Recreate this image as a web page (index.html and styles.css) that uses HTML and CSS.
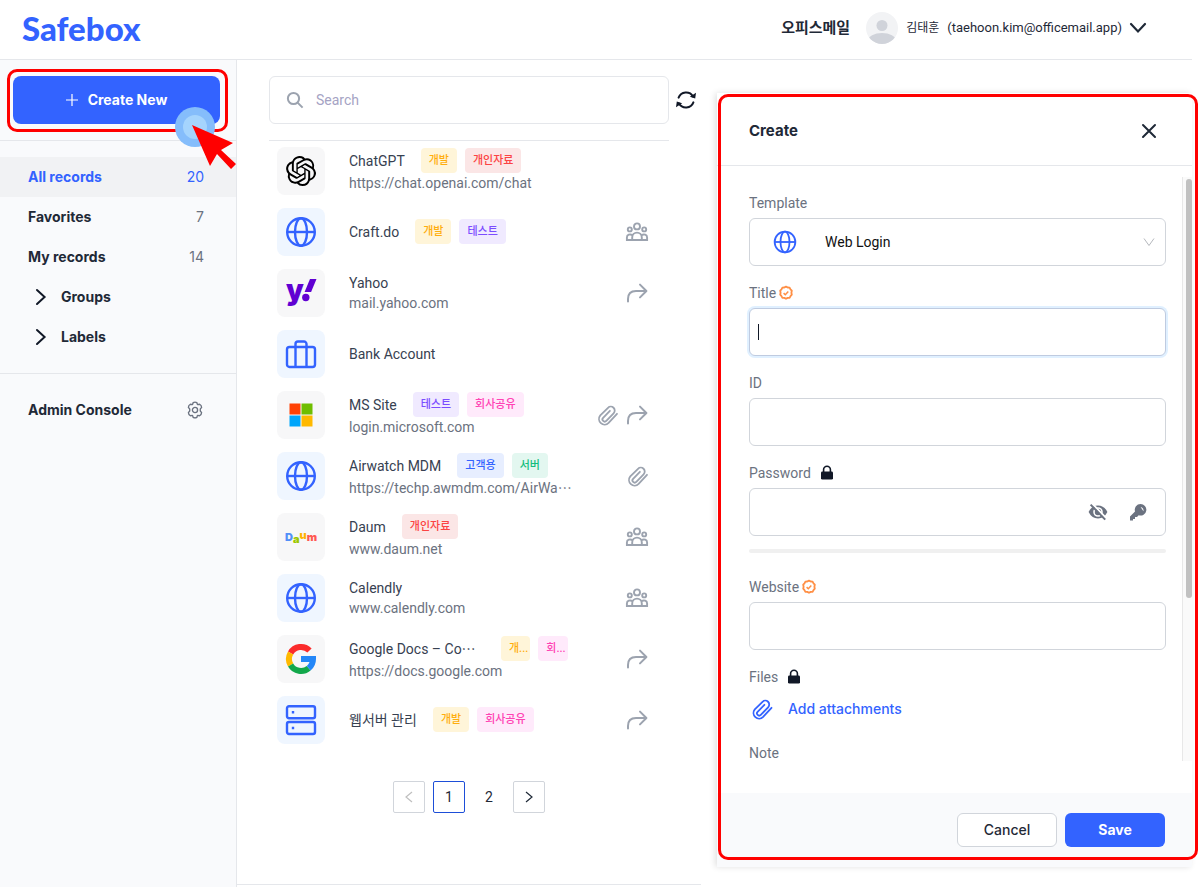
FILE: index.html
```
<!DOCTYPE html>
<html lang="ko">
<head>
    <meta charset="UTF-8">
    <meta name="viewport" content="width=device-width, initial-scale=1.0">
    <title>Safebox</title>
    <link rel="stylesheet" href="styles.css">
</head>
<body>

    <!-- shared icons -->
    <svg class="sprite" aria-hidden="true">
        <symbol id="i-globe" viewBox="0 0 32 32">
            <g fill="none" stroke="currentColor" stroke-width="2.4">
                <circle cx="16" cy="16" r="13.8"/>
                <ellipse cx="16" cy="16" rx="6" ry="13.8"/>
                <path d="M2 16h28"/>
            </g>
        </symbol>
        <symbol id="i-people" viewBox="0 0 24 24">
            <g fill="none" stroke="currentColor" stroke-width="1.9">
                <circle cx="12" cy="6.4" r="3"/>
                <circle cx="4.8" cy="9.4" r="2"/>
                <circle cx="19.2" cy="9.4" r="2"/>
                <path d="M7.2 20v-2.6a4.8 4.8 0 0 1 9.6 0V20z"/>
                <path d="M7.2 20H1.900v-2.600c0-2.600 3-3.800 5.700-2.200M16.800 20h5.300v-2.600c0-2.600-3-3.800-5.700-2.200"/>
            </g>
        </symbol>
        <symbol id="i-share" viewBox="0 0 24 24">
            <path d="M3 20.5V18q0-8 8-8h10M15 3.6l6.4 6.4-6.400 6.400" fill="none" stroke="currentColor" stroke-width="2" stroke-linecap="round" stroke-linejoin="round"/>
        </symbol>
        <symbol id="i-clip" viewBox="0 0 24 24">
            <path d="M22 9.8 L13.6 18.9a5.6 5.6 0 0 1-8.3-7.5L13 3.8a3.9 3.9 0 0 1 5.6 5.5l-7.3 7.6a2.2 2.2 0 0 1-3.2-3.1l6.8-7" transform="translate(0 1)" fill="none" stroke="currentColor" stroke-width="1.8" stroke-linecap="round" stroke-linejoin="round"/>
        </symbol>
        <symbol id="i-lock" viewBox="0 0 14 16">
            <path d="M3.6 7V4.6a3.4 3.4 0 0 1 6.8 0V7" fill="none" stroke="currentColor" stroke-width="1.6"/>
            <rect x="1" y="6.6" width="12" height="8" rx="1.4" fill="currentColor"/>
        </symbol>
        <symbol id="i-verified" viewBox="0 0 16 16">
            <path d="M8 1.6l1.7.9 1.9.1.9 1.7 1.3 1.4-.4 2 .4 2-1.3 1.4-.9 1.7-1.9.1-1.7.9-1.7-.9-1.9-.1-.9-1.7-1.3-1.4.4-2-.4-2 1.3-1.4.9-1.7 1.9-.1z" fill="none" stroke="currentColor" stroke-width="1.8" stroke-linejoin="round"/>
            <path d="M5.6 8.1l1.7 1.6 3-3.1" fill="none" stroke="currentColor" stroke-width="1.5"/>
        </symbol>
        <symbol id="i-right" viewBox="0 0 12 18">
            <path d="M2 2l7.6 7L2 16" fill="none" stroke="currentColor" stroke-width="2" stroke-linecap="round"/>
        </symbol>
        <symbol id="i-page" viewBox="0 0 12 12">
            <path d="M3 1l6 5-6 5" fill="none" stroke="currentColor" stroke-width="1.2"/>
        </symbol>
    </svg>

    <div class="app">
        <header class="topbar">
            <a class="logo" href="#">Safebox</a>
            <button class="account" type="button">
                <strong class="company">오피스메일</strong>
                <svg class="avatar" viewBox="0 0 32 32">
                    <defs><clipPath id="face"><circle cx="16" cy="16" r="16"/></clipPath></defs>
                    <g clip-path="url(#face)">
                        <rect width="32" height="32" fill="#f2f3f5"/>
                        <circle cx="16" cy="13.5" r="5.5" fill="#d0d3da"/>
                        <ellipse cx="16" cy="29" rx="14" ry="8" fill="#d0d3da"/>
                    </g>
                </svg>
                <span class="user-name">김태훈</span>
                <span class="user-mail">(taehoon.kim@officemail.app)</span>
                <svg class="caret-down" viewBox="0 0 18 18"><path d="M2 5l7 7.5L16 5" fill="none" stroke="currentColor" stroke-width="2.2" stroke-linecap="round"/></svg>
            </button>
        </header>

        <div class="layout">
            <aside class="sidebar">
                <div class="create">
                    <button class="create-btn" type="button">
                        <svg width="12" height="12" viewBox="0 0 12 12"><path d="M6 0v12M0 6h12" stroke="currentColor" stroke-width="1.2"/></svg>
                        Create New
                    </button>
                    <div class="create-mark"></div>
                    <svg class="pointer" viewBox="0 0 62 62">
                        <circle cx="20" cy="20" r="20" fill="#85bdfb"/>
                        <circle cx="20" cy="20" r="12" fill="#a5d4fd"/>
                        <path d="M17 18l41 18-12 7 15 14-5 5-14-15-7 12z" fill="#f00"/>
                    </svg>
                </div>
                <nav class="menu">
                    <a class="active" href="#">All records <span>20</span></a>
                    <a href="#">Favorites <span>7</span></a>
                    <a href="#">My records <span>14</span></a>
                    <button type="button"><svg><use href="#i-right"/></svg>Groups</button>
                    <button type="button"><svg><use href="#i-right"/></svg>Labels</button>
                </nav>
                <a class="admin" href="#">Admin Console
                    <svg width="18" height="18" viewBox="0 0 16 16" fill="none" stroke="currentColor" stroke-width="1.2" stroke-linejoin="round">
                        <path d="M6.4 1.4Q8 .5 9.6 1.4L10.2 3.2 12.1 2.9Q13.8 3.8 13.9 5.7L12.7 7.1V8.9L13.9 10.3Q13.8 12.2 12.1 13.1L10.2 12.8 9.6 14.6Q8 15.5 6.4 14.6L5.8 12.8 3.9 13.1Q2.2 12.2 2.1 10.3L3.3 8.9V7.1L2.1 5.7Q2.2 3.8 3.9 2.9L5.8 3.2z"/>
                        <circle cx="8" cy="8" r="2.3"/>
                    </svg>
                </a>
            </aside>

            <main class="records">
                <div class="search-row">
                    <label class="search">
                        <svg width="18" height="18" viewBox="0 0 18 18" fill="none" stroke="currentColor" stroke-width="2"><circle cx="7.5" cy="7.5" r="5.6"/><path d="M11.6 11.6L16.6 16.6"/></svg>
                        <input type="search" placeholder="Search" aria-label="Search">
                    </label>
                    <button class="refresh" type="button" aria-label="Refresh">
                        <svg width="20" height="20" viewBox="0 0 20 20">
                            <path d="M2.6 7.6A8 8 0 0 1 17 6.4M17.4 12.4A8 8 0 0 1 3 13.6" fill="none" stroke="currentColor" stroke-width="2" stroke-linecap="round"/>
                            <path d="M20 2.8L19.2 8.6 13.8 6.8zM0 17.2L.8 11.4 6.2 13.2z" fill="currentColor"/>
                        </svg>
                    </button>
                </div>

                <ul class="list">
                    <li>
                        <div class="thumb">
                            <svg class="openai" viewBox="0 0 24 24"><path d="M22.2819 9.8211a5.9847 5.9847 0 0 0-.5157-4.9108 6.0462 6.0462 0 0 0-6.5098-2.9A6.0651 6.0651 0 0 0 4.9807 4.1818a5.9847 5.9847 0 0 0-3.9977 2.9 6.0462 6.0462 0 0 0 .7427 7.0966 5.98 5.98 0 0 0 .511 4.9107 6.051 6.051 0 0 0 6.5146 2.9001A5.9847 5.9847 0 0 0 13.2599 24a6.0557 6.0557 0 0 0 5.7718-4.2058 5.9894 5.9894 0 0 0 3.9977-2.9001 6.0557 6.0557 0 0 0-.7475-7.0729zm-9.022 12.6081a4.4755 4.4755 0 0 1-2.8764-1.0408l.1419-.0804 4.7783-2.7582a.7948.7948 0 0 0 .3927-.6813v-6.7369l2.02 1.1686a.071.071 0 0 1 .038.052v5.5826a4.504 4.504 0 0 1-4.4945 4.4944zm-9.6607-4.1254a4.4708 4.4708 0 0 1-.5346-3.0137l.142.0852 4.783 2.7582a.7712.7712 0 0 0 .7806 0l5.8428-3.3685v2.3324a.0804.0804 0 0 1-.0332.0615L9.74 19.9502a4.4992 4.4992 0 0 1-6.1408-1.6464zM2.3408 7.8956a4.485 4.485 0 0 1 2.3655-1.9728V11.6a.7664.7664 0 0 0 .3879.6765l5.8144 3.3543-2.0201 1.1685a.0757.0757 0 0 1-.071 0l-4.8303-2.7865A4.504 4.504 0 0 1 2.3408 7.872zm16.5963 3.8558L13.1038 8.364 15.1192 7.2a.0757.0757 0 0 1 .071 0l4.8303 2.7913a4.4944 4.4944 0 0 1-.6765 8.1042v-5.6772a.79.79 0 0 0-.407-.667zm2.0107-3.0231l-.142-.0852-4.7735-2.7818a.7759.7759 0 0 0-.7854 0L9.409 9.2297V6.8974a.0662.0662 0 0 1 .0284-.0615l4.8303-2.7866a4.4992 4.4992 0 0 1 6.6802 4.66zM8.3065 12.863l-2.02-1.1638a.0804.0804 0 0 1-.038-.0567V6.0742a4.4992 4.4992 0 0 1 7.3757-3.4537l-.142.0805L8.704 5.459a.7948.7948 0 0 0-.3927.6813zm1.0976-2.3654l2.602-1.4998 2.6069 1.4998v2.9994l-2.5974 1.4997-2.6067-1.4997Z"/></svg>
                        </div>
                        <div class="info">
                            <div class="name">ChatGPT <span class="tag yellow">개발</span><span class="tag red">개인자료</span></div>
                            <div class="url">https://chat.openai.com/chat</div>
                        </div>
                    </li>
                    <li>
                        <div class="thumb blue"><svg><use href="#i-globe"/></svg></div>
                        <div class="info">
                            <div class="name">Craft.do <span class="tag yellow">개발</span><span class="tag purple">테스트</span></div>
                        </div>
                        <div class="actions"><svg><use href="#i-people"/></svg></div>
                    </li>
                    <li>
                        <div class="thumb">
                            <svg viewBox="0 0 32 32" fill="#6001d2">
                                <text class="yahoo" x="1" y="23">y</text>
                                <path d="M25 2h6.500l-5.400 13h-6.500z"/>
                                <circle cx="20.800" cy="20.500" r="3.700"/>
                            </svg>
                        </div>
                        <div class="info">
                            <div class="name">Yahoo</div>
                            <div class="url">mail.yahoo.com</div>
                        </div>
                        <div class="actions"><svg><use href="#i-share"/></svg></div>
                    </li>
                    <li>
                        <div class="thumb blue">
                            <svg viewBox="0 0 32 32" fill="none" stroke="currentColor" stroke-width="2.4">
                                <rect x="2" y="9" width="28" height="20" rx="2.5"/>
                                <path d="M10.5 29V6a2.500 2.500 0 0 1 2.500-2.500h6A2.500 2.500 0 0 1 21.500 6v23"/>
                            </svg>
                        </div>
                        <div class="info">
                            <div class="name">Bank Account</div>
                        </div>
                    </li>
                    <li>
                        <div class="thumb">
                            <svg viewBox="0 0 32 32">
                                <path d="M4.500 4.500h11v11h-11z" fill="#ff4104"/>
                                <path d="M16.500 4.500h11v11h-11z" fill="#6fbe00"/>
                                <path d="M4.500 16.500h11v11h-11z" fill="#00a6fb"/>
                                <path d="M16.500 16.500h11v11h-11z" fill="#ffb900"/>
                            </svg>
                        </div>
                        <div class="info">
                            <div class="name">MS Site <span class="tag purple">테스트</span><span class="tag pink">회사공유</span></div>
                            <div class="url">login.microsoft.com</div>
                        </div>
                        <div class="actions"><svg><use href="#i-clip"/></svg><svg><use href="#i-share"/></svg></div>
                    </li>
                    <li>
                        <div class="thumb blue"><svg><use href="#i-globe"/></svg></div>
                        <div class="info">
                            <div class="name">Airwatch MDM <span class="tag navy">고객용</span><span class="tag green">서버</span></div>
                            <div class="url">https://techp.awmdm.com/AirWa⋯</div>
                        </div>
                        <div class="actions"><svg><use href="#i-clip"/></svg></div>
                    </li>
                    <li>
                        <div class="thumb">
                            <svg class="daum" viewBox="0 0 32 32">
                                <text x="0" y="20"><tspan fill="#5290f8">D</tspan><tspan dy="2" fill="#9cc800">a</tspan><tspan dy="-4" fill="#ffb300">u</tspan><tspan dy="2" fill="#ff5951">m</tspan></text>
                            </svg>
                        </div>
                        <div class="info">
                            <div class="name">Daum <span class="tag red">개인자료</span></div>
                            <div class="url">www.daum.net</div>
                        </div>
                        <div class="actions"><svg><use href="#i-people"/></svg></div>
                    </li>
                    <li>
                        <div class="thumb blue"><svg><use href="#i-globe"/></svg></div>
                        <div class="info">
                            <div class="name">Calendly</div>
                            <div class="url">www.calendly.com</div>
                        </div>
                        <div class="actions"><svg><use href="#i-people"/></svg></div>
                    </li>
                    <li>
                        <div class="thumb">
                            <svg viewBox="0 0 32 32" fill="none" stroke-width="6">
                                <path d="M24.5 7.5A12 12 0 0 0 5.6 10" stroke="#fb2c2c"/>
                                <path d="M5.6 10a12 12 0 0 0 0 12" stroke="#ffb900"/>
                                <path d="M5.6 22A12 12 0 0 0 23.7 25.2" stroke="#12a84b"/>
                                <path d="M23.7 25.2A12 12 0 0 0 28 16H16" stroke="#2487f8"/>
                            </svg>
                        </div>
                        <div class="info">
                            <div class="name"><span class="cut-name">Google Docs – Co⋯</span> <span class="tag yellow cut">개...</span><span class="tag pink cut">회...</span></div>
                            <div class="url">https://docs.google.com</div>
                        </div>
                        <div class="actions"><svg><use href="#i-share"/></svg></div>
                    </li>
                    <li>
                        <div class="thumb blue">
                            <svg viewBox="0 0 32 32" fill="none" stroke="currentColor" stroke-width="2.4">
                                <rect x="2" y="2.3" width="28" height="12" rx="2"/>
                                <rect x="2" y="18" width="28" height="12" rx="2"/>
                                <path d="M6.800 8.300h2.400M6.800 24h2.400"/>
                            </svg>
                        </div>
                        <div class="info">
                            <div class="name">웹서버 관리 <span class="tag yellow">개발</span><span class="tag pink">회사공유</span></div>
                        </div>
                        <div class="actions"><svg><use href="#i-share"/></svg></div>
                    </li>
                </ul>

                <nav class="pages" aria-label="Pages">
                    <button class="prev" type="button" aria-label="Previous page" disabled><svg><use href="#i-page"/></svg></button>
                    <button class="current" type="button">1</button>
                    <button class="plain" type="button">2</button>
                    <button type="button" aria-label="Next page"><svg><use href="#i-page"/></svg></button>
                </nav>
            </main>

            <form class="drawer">
                <div class="drawer-head">
                    <h2>Create</h2>
                    <button type="button" aria-label="Close">
                        <svg width="16" height="16" viewBox="0 0 16 16"><path d="M2 2l12 12M14 2L2 14" stroke="currentColor" stroke-width="2" stroke-linecap="round"/></svg>
                    </button>
                </div>

                <div class="drawer-body">
                    <div class="fields">
                        <div class="field">
                            <label for="template">Template</label>
                            <div class="control">
                                <svg class="template-icon"><use href="#i-globe"/></svg>
                                <select id="template">
                                    <option>Web Login</option>
                                </select>
                                <svg class="select-arrow" viewBox="0 0 12 12"><path d="M1 2.5l5 7 5-7" fill="none" stroke="currentColor"/></svg>
                            </div>
                        </div>
                        <div class="field">
                            <label for="title">Title <svg class="verified"><use href="#i-verified"/></svg></label>
                            <input class="focused" type="text" id="title">
                        </div>
                        <div class="field">
                            <label for="login">ID</label>
                            <input type="text" id="login">
                        </div>
                        <div class="field">
                            <label for="password">Password <svg class="lock"><use href="#i-lock"/></svg></label>
                            <div class="control">
                                <input type="password" id="password">
                                <div class="password-tools">
                                    <button type="button" aria-label="Show password">
                                        <svg width="20" height="20" viewBox="0 0 20 20">
                                            <path d="M.6 10Q3.8 3.5 10 3.5T19.4 10Q16.2 16.5 10 16.5T.6 10z" fill="currentColor"/>
                                            <circle cx="10" cy="10" r="4" fill="none" stroke="#fff" stroke-width="1.6"/>
                                            <path d="M4.2 1.6l14 14.6" stroke="#fff" stroke-width="2"/>
                                            <path d="M2.6 2.6l14.6 15" stroke="currentColor" stroke-width="2"/>
                                        </svg>
                                    </button>
                                    <button type="button" aria-label="Generate password">
                                        <svg width="20" height="20" viewBox="0 0 20 20">
                                            <path d="M12.5 2a5.8 5.8 0 1 1-1.8 11.3L9 15H7v2H5v1.5H2V14.6L7 9.4A5.8 5.8 0 0 1 12.5 2z" fill="currentColor"/>
                                            <path d="M12.6 5a3.4 3.4 0 0 1 2.8 4.2z" fill="#fff"/>
                                        </svg>
                                    </button>
                                </div>
                            </div>
                        </div>
                        <div class="strength"></div>
                        <div class="field">
                            <label for="website">Website <svg class="verified"><use href="#i-verified"/></svg></label>
                            <input type="text" id="website">
                        </div>
                        <div class="field">
                            <div class="caption">Files <svg class="lock"><use href="#i-lock"/></svg></div>
                            <button class="attach" type="button"><svg><use href="#i-clip"/></svg>Add attachments</button>
                        </div>
                        <div class="field">
                            <label for="note">Note</label>
                            <textarea id="note"></textarea>
                        </div>
                    </div>
                    <div class="scroll-track"><div class="scroll-thumb"></div></div>
                </div>

                <div class="drawer-foot">
                    <button class="cancel" type="button">Cancel</button>
                    <button class="save" type="submit">Save</button>
                </div>
                <div class="drawer-mark"></div>
            </form>
        </div>
    </div>

</body>
</html>
```
FILE: styles.css
```
* {
    box-sizing: border-box;
}

body {
    margin: 0;
    font-family: Roboto, 'Noto Sans CJK KR', sans-serif;
    font-size: 14px;
    line-height: 20px;
    color: #1f2937;
    background: #fff;
}

button, input, select, textarea {
    font: inherit;
    color: inherit;
}

button {
    padding: 0;
    border: none;
    background: none;
    cursor: pointer;
}

a {
    color: inherit;
    text-decoration: none;
}

svg {
    display: block;
    flex: none;
}

.sprite {
    position: absolute;
    width: 0;
    height: 0;
}

.app {
    display: flex;
    flex-direction: column;
    min-height: 100vh;
    margin-right: 6px;
}

/* top bar */
.topbar {
    display: flex;
    justify-content: space-between;
    align-items: center;
    height: 60px;
    padding: 0 45px 4px 22px;
    border-bottom: 1px solid #e5e7eb;
}

.logo {
    font-family: Lato, sans-serif;
    font-size: 33px;
    font-weight: 900;
    line-height: 40px;
    color: #3363ff;
}

.account {
    display: flex;
    align-items: center;
    font-size: 13px;
}

.company {
    margin-right: 16px;
    font-size: 15px;
}

.avatar {
    width: 32px;
    height: 32px;
    margin-right: 8px;
}

.user-name {
    margin-right: 8px;
    font-size: 12px;
}

.caret-down {
    width: 18px;
    height: 18px;
    margin-left: 7px;
}

.layout {
    display: grid;
    grid-template-columns: 237px minmax(0, 464fr) minmax(0, 491fr);
    flex: 1;
}

/* sidebar */
.sidebar {
    background: #f9fafc;
    border-right: 1px solid #e5e7eb;
}

.create {
    position: relative;
    padding: 16px 16px 16px 13px;
    border-bottom: 1px solid #e5e7eb;
}

.create-btn, .menu, .admin, .attach, .drawer-head h2, .drawer-foot {
    font-family: Inter, 'Noto Sans CJK KR', sans-serif;
}

.create-btn {
    display: flex;
    align-items: center;
    justify-content: center;
    gap: 10px;
    width: 100%;
    height: 48px;
    border-radius: 8px;
    background: #3363ff;
    color: #fff;
    font-weight: 700;
}

.create-mark, .drawer-mark {
    position: absolute;
    border: 3px solid #f00;
    border-radius: 10px;
    pointer-events: none;
}

.create-mark {
    inset: 9px 8px 8px 7px;
}

.pointer {
    position: absolute;
    left: 175px;
    top: 47px;
    width: 62px;
    height: 62px;
    pointer-events: none;
}

.menu {
    padding: 16px 0;
    border-bottom: 1px solid #e5e7eb;
}

.menu a, .menu button, .admin {
    display: flex;
    align-items: center;
    width: 100%;
    height: 40px;
    padding: 0 32px 0 28px;
    font-weight: 700;
}

.menu a, .admin {
    justify-content: space-between;
}

.menu span {
    font-weight: 400;
    color: #6b7280;
}

.menu .active {
    background: #f1f2f4;
}

.menu .active, .menu .active span {
    color: #3363ff;
}

.menu button {
    gap: 14px;
    padding-left: 35px;
}

.menu svg {
    width: 12px;
    height: 18px;
    color: #111827;
}

.admin {
    margin-top: 16px;
}

.admin svg {
    color: #6b7280;
}

/* record list */
.records {
    margin-bottom: 2px;
    padding: 16px 32px;
    border-bottom: 1px solid #e5e7eb;
}

.search-row {
    display: flex;
    align-items: center;
    margin-right: -27px;
}

.search {
    display: flex;
    flex: 1;
    align-items: center;
    gap: 12px;
    height: 48px;
    padding: 0 16px;
    border: 1px solid #e5e7eb;
    border-radius: 6px;
    color: #9ca3af;
}

.search input {
    flex: 1;
    min-width: 0;
    padding: 0;
    border: none;
    outline: none;
    background: none;
    color: #1f2937;
}

.search input::placeholder {
    color: #a5a3c4;
}

.refresh {
    margin-left: 7px;
    color: #111827;
}

.list {
    margin: 16px 0 30px;
    padding: 0;
    border-top: 1px solid #e5e7eb;
    list-style: none;
}

.list li {
    display: flex;
    align-items: center;
    height: 61px;
    padding: 0 20px 2px 8px;
}

.thumb {
    display: flex;
    align-items: center;
    justify-content: center;
    flex: none;
    width: 48px;
    height: 48px;
    border-radius: 8px;
    background: #f7f7f8;
}

.thumb.blue {
    background: #eff6ff;
    color: #3363ff;
}

.thumb svg {
    width: 32px;
    height: 32px;
    overflow: visible;
}

.thumb .openai {
    width: 30px;
    height: 30px;
}

.yahoo {
    font-family: Inter, sans-serif;
    font-size: 28px;
    font-weight: 900;
}

.daum {
    font-family: Inter, sans-serif;
    font-size: 11px;
    font-weight: 900;
}

.info {
    flex: 1;
    min-width: 0;
    margin-left: 24px;
}

.name {
    display: flex;
    align-items: center;
    gap: 8px;
    color: #374151;
    white-space: nowrap;
}

.cut-name {
    width: 136px;
}

.url {
    color: #6b7280;
    white-space: nowrap;
}

.tag {
    height: 25px;
    padding: 0 8px;
    border-radius: 4px;
    font-size: 11px;
    font-weight: 500;
    line-height: 25px;
}

.tag:first-of-type, .cut-name + .tag {
    margin-left: 8px;
}

.tag.cut {
    padding-right: 2px;
}

.yellow {
    background: #fff5d9;
    color: #ffae0d;
}

.red {
    background: #fbe6e6;
    color: #fb4343;
}

.purple {
    background: #f0eaff;
    color: #7c4dff;
}

.pink {
    background: #ffeafb;
    color: #ff43b4;
}

.navy {
    background: #e7eeff;
    color: #3363ff;
}

.green {
    background: #e3f7f0;
    color: #14be7c;
}

.actions {
    display: flex;
    gap: 6px;
    color: #9ca3af;
}

.actions svg {
    width: 24px;
    height: 24px;
}

.pages {
    display: flex;
    justify-content: center;
    gap: 8px;
}

.pages button {
    display: flex;
    align-items: center;
    justify-content: center;
    width: 32px;
    height: 32px;
    border: 1px solid #d1d5db;
    border-radius: 2px;
}

.pages svg {
    width: 12px;
    height: 12px;
}

.pages .prev {
    color: #bfbfbf;
}

.pages .prev svg {
    transform: rotate(180deg);
}

.pages .current {
    border-color: #1d4ed8;
}

.pages .plain {
    border-color: transparent;
}

/* create drawer */
.drawer {
    position: relative;
    display: flex;
    flex-direction: column;
    margin: 33px 0 20px 16px;
    background: #fff;
    box-shadow: -2px 0 6px rgba(0, 0, 0, 0.12);
}

.drawer-mark {
    inset: 1px -6px 7px 1px;
}

.drawer-head {
    display: flex;
    align-items: center;
    justify-content: space-between;
    height: 73px;
    padding: 4px 35px 0 32px;
    border-bottom: 1px solid #e5e7eb;
}

.drawer-head h2 {
    margin: 0;
    font-size: 15px;
    font-weight: 700;
}

.drawer-body {
    display: flex;
    flex: 1 1 0;
    min-height: 0;
    margin-bottom: 32px;
    overflow: hidden;
}

.fields {
    flex: 1;
    min-width: 0;
    padding: 22px 16px 0 32px;
}

.field {
    margin-bottom: 12px;
}

.field label, .caption {
    display: flex;
    align-items: center;
    height: 30px;
    color: #6b7280;
}

.field input, .field select, .field textarea {
    display: block;
    width: 100%;
    height: 48px;
    padding: 0 10px;
    border: 1px solid #d1d5db;
    border-radius: 6px;
    outline: none;
    background-color: #fff;
}

/* focus ring and text cursor */
.field .focused {
    background-image: linear-gradient(#111827, #111827);
    background-position: 8px center;
    background-size: 1px 16px;
    background-repeat: no-repeat;
    border-color: #bfcbe0;
    box-shadow: 0 0 0 2px #e0f0ff;
}

.control {
    position: relative;
}

.field select {
    appearance: none;
    padding-left: 75px;
    color: #111;
}

.template-icon {
    position: absolute;
    left: 24px;
    top: 12px;
    width: 24px;
    height: 24px;
    color: #3363ff;
}

.select-arrow {
    position: absolute;
    right: 11px;
    top: 18px;
    width: 12px;
    height: 12px;
    color: #b5b8bd;
    pointer-events: none;
}

.verified {
    width: 16px;
    height: 16px;
    margin-left: 2px;
    color: #ff8f45;
}

.lock {
    width: 14px;
    height: 16px;
    margin-left: 9px;
    color: #111827;
}

.password-tools {
    position: absolute;
    right: 18px;
    top: 14px;
    display: flex;
    gap: 20px;
    color: #6b7280;
}

.strength {
    height: 4px;
    margin: 13px 0 19px;
    border-radius: 2px;
    background: #f0f0f0;
}

.attach {
    display: flex;
    align-items: center;
    gap: 14px;
    height: 34px;
    color: #3363ff;
    font-weight: 500;
}

.attach svg {
    width: 25px;
    height: 24px;
}

.scroll-track {
    width: 10px;
    margin-top: 11px;
    padding: 2px 0 0 3px;
    border-left: 1px solid #e8e8e8;
    background: #fafafa;
}

.scroll-thumb {
    height: 72%;
    border-radius: 3px;
    background: #c1c1c1;
}

.drawer-foot {
    display: flex;
    justify-content: flex-end;
    gap: 8px;
    padding: 20px 27px;
    background: #f9fafc;
}

.drawer-foot button {
    width: 100px;
    height: 34px;
    border-radius: 6px;
}

.drawer-foot .cancel {
    border: 1px solid #d1d5db;
    background: #fff;
    font-weight: 500;
}

.drawer-foot .save {
    background: #3363ff;
    color: #fff;
    font-weight: 700;
}
```
